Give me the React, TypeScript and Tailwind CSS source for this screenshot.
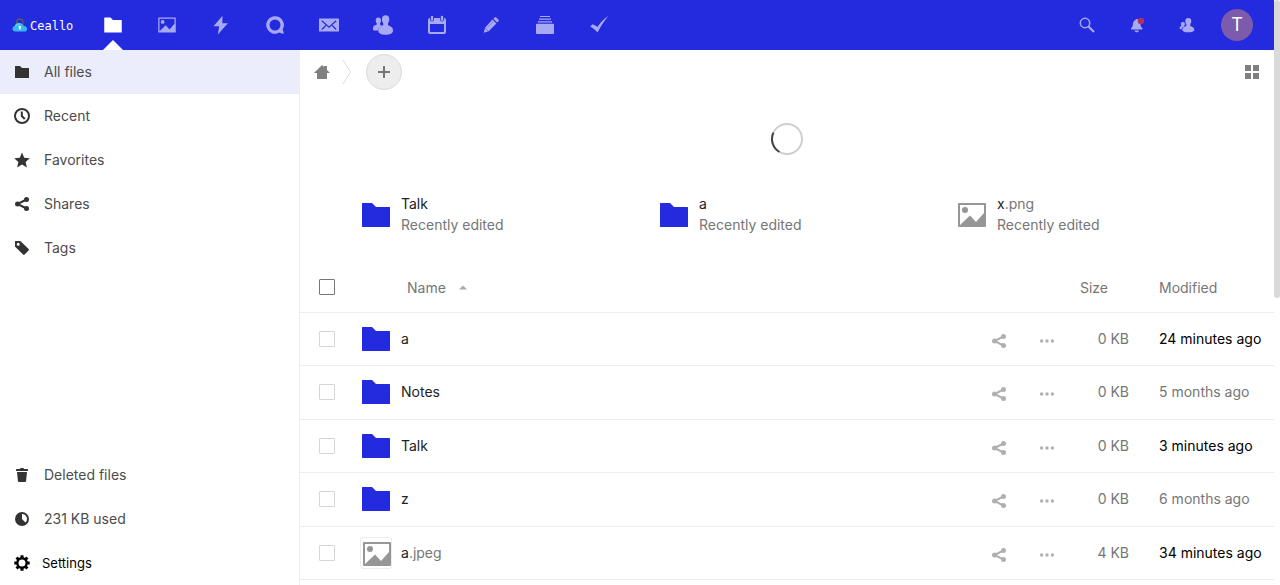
import type { ReactNode } from 'react';

type IconProps = { className?: string };

function Icon({ className = 'size-4', box = 16, children }: IconProps & { box?: number; children: ReactNode }) {
  return (
    <svg viewBox={`0 0 ${box} ${box}`} className={`shrink-0 ${className}`} fill="currentColor" aria-hidden="true">
      {children}
    </svg>
  );
}

const FolderIcon = ({ className }: IconProps) => (
  <Icon className={className}>
    <path d="M1.3 2a.3.3 0 0 0-.3.3v11.4c0 .17.13.3.3.3h13.4a.3.3 0 0 0 .3-.3V4.3a.3.3 0 0 0-.3-.3H8L6 2z" />
  </Icon>
);

const ImageIcon = ({ className }: IconProps) => (
  <Icon className={className} box={32}>
    <path
      fillRule="evenodd"
      d="M3 4a1 1 0 0 0-1 1v22a1 1 0 0 0 1 1h26a1 1 0 0 0 1-1V5a1 1 0 0 0-1-1zm1 2h24v8l-8 9-6-6.500-10 9.500z"
    />
    <circle cx="9" cy="11" r="3" />
  </Icon>
);

const BoltIcon = ({ className }: IconProps) => (
  <Icon className={className} box={32}>
    <path d="M18.500 1 4 18h9l-2 13 16-18h-9z" />
  </Icon>
);

const TalkIcon = ({ className }: IconProps) => (
  <Icon className={className} box={32}>
    <path
      fillRule="evenodd"
      d="M16 2a14 14 0 1 0 7.300 25.950c1.900 1.300 5.800 2.500 6.500 1.800.7-.7-.8-4.700-1.750-6.400A14 14 0 0 0 16 2zm0 5.200a8.800 8.800 0 1 1 0 17.600 8.800 8.800 0 0 1 0-17.600z"
    />
  </Icon>
);

const MailIcon = ({ className }: IconProps) => (
  <Icon className={className} box={20}>
    <rect x="0" y="3.500" width="20" height="13" rx=".6" />
    <path d="M2.800 5.800 10 12.200l7.200-6.400M2.800 14.500l4-4M17.200 14.500l-4-4" fill="none" stroke="#242bdf" strokeWidth="1.200" />
  </Icon>
);

const ContactsIcon = ({ className }: IconProps) => (
  <Icon className={className} box={20}>
    <path d="M5.300 2.500c1.700 0 2.700 1.200 2.700 3 0 1.200-.4 2.200-1 2.900v1.100c1 .5 1.700.8 2.100 1.200-2.400 1.100-4 1.900-4.100 4.900H1.500C.4 15.600 0 15 0 14.200c0-3.300.7-3.500 3.800-4.800V8.400c-.7-.7-1.100-1.700-1.100-2.900 0-1.800.9-3 2.600-3z" />
    <path d="M12.600.200c2.400 0 3.700 1.600 3.700 4.100 0 1.500-.5 2.900-1.300 3.900v2.100c3.300 1.400 5 1.800 5 5.600 0 2.400-3.300 3.800-7.400 3.800s-7.300-1.400-7.300-3.800c0-3.800 1.600-4.300 4.900-5.600V8.200C9.400 7.200 8.900 5.800 8.900 4.300 8.900 1.800 10.200.2 12.600.2z" />
  </Icon>
);

const CalendarIcon = ({ className }: IconProps) => (
  <Icon className={className} box={20}>
    <path fillRule="evenodd" d="M3 3v1.500a2 2 0 0 0 4 0V3h6v1.500a2 2 0 0 0 4 0V3a2 2 0 0 1 2 2v12a2 2 0 0 1-2 2H3a2 2 0 0 1-2-2V5a2 2 0 0 1 2-2zm0 6v7.200c0 .5.300.8.800.8h12.400c.5 0 .8-.3.8-.8V9z" />
    <rect x="3.800" y=".8" width="2.400" height="5" rx="1.200" />
    <rect x="13.800" y=".8" width="2.400" height="5" rx="1.200" />
  </Icon>
);

const PencilIcon = ({ className }: IconProps) => (
  <Icon className={className}>
    <path d="M11.700.500c.5-.5 1.100-.5 1.500 0l2.300 2.300c.5.500.5 1 0 1.500l-1.300 1.300-3.800-3.800zM9.500 2.600l3.900 3.900-7.700 7.700-4.900 1.600 1.200-5z" />
    <path d="m4.500 10.500 6-6" stroke="#242bdf" strokeWidth=".6" opacity=".4" />
    <path d="m2 11 3.200 3.200" stroke="#242bdf" strokeWidth=".6" opacity=".7" />
  </Icon>
);

const DeckIcon = ({ className }: IconProps) => (
  <Icon className={className} box={20}>
    <path d="M5 1h10v1H5zM4 3.500h12v1.200H4zM3 6.200h14v1.400H3z" />
    <rect x="1" y="8.800" width="18" height="10.200" rx="1" />
  </Icon>
);

const CheckIcon = ({ className }: IconProps) => (
  <Icon className={className} box={20}>
    <path d="M19.300 1C15 3.800 11.500 7.300 8.400 12 6.500 10.600 5 9.700 3.600 9.200L1.200 11.500c3 1.500 5.300 3.600 7.300 6C12 10.800 15.300 5.800 19.300 1z" />
  </Icon>
);

const SearchIcon = ({ className }: IconProps) => (
  <Icon className={className}>
    <path d="m9.500 9.500 5.500 5.500" stroke="currentColor" strokeWidth="2.100" />
    <circle cx="6" cy="6" r="4.700" fill="none" stroke="currentColor" strokeWidth="1.500" />
  </Icon>
);

const BellIcon = ({ className }: IconProps) => (
  <Icon className={className}>
    <path d="M7.700 2C6.700 2 6.500 2.500 6.500 3.100 4.500 3.700 4 5.500 3.900 7.500 3.800 9.500 3 10.300 2.200 11.100c-.5.500-.3 1.400.4 1.400h10.200c.7 0 .9-.9.4-1.400-.8-.8-1.600-1.600-1.700-3.600C11.400 4 10 2.600 7.700 2z" />
    <path d="M5.500 13.400h4.400c0 1-.9 1.900-2.200 1.900s-2.200-.9-2.200-1.900z" />
    <circle cx="12" cy="4" r="3.200" fill="#b0325e" />
  </Icon>
);

const UsersMenuIcon = ({ className }: IconProps) => (
  <Icon className={className}>
    <path d="M9.300 1c2 0 3 1.300 3 3.100 0 1.300-.4 2.200-1 3v1.800c2.700 1 4 1.500 4 4 0 1.400-2.800 2.300-6 2.300s-6-.9-6-2.300c0-2.400 1-2.900 4-4V7.100c-.7-.8-1-1.700-1-3C6.300 2.300 7.300 1 9.300 1z" />
    <path d="M3.900 5c1.300 0 2 .9 2 2 0 .8-.2 1.300-.6 1.800v.8C3.400 10.300 2.800 11 2.600 12.200H1.500c-.6 0-.9-.3-.9-1 0-1.200.5-1.500 1.900-2.100V8.800C2.100 8.300 1.900 7.800 1.900 7c0-1.100.7-2 2-2z" />
  </Icon>
);

const ClockIcon = ({ className }: IconProps) => (
  <Icon className={className}>
    <circle cx="8" cy="8" r="7" fill="none" stroke="currentColor" strokeWidth="2" />
    <path d="M7.800 3.500V8l3 3" fill="none" stroke="currentColor" strokeWidth="2" />
  </Icon>
);

const StarIcon = ({ className }: IconProps) => (
  <Icon className={className}>
    <path d="m8 .5 2.200 5.200 5.600.5-4.200 3.700 1.300 5.500L8 12.500l-4.900 2.900 1.300-5.500L.2 6.200l5.600-.5z" />
  </Icon>
);

const ShareIcon = ({ className }: IconProps) => (
  <Icon className={className}>
    <path d="M12.500 3.500 3.500 8l9 4.500" fill="none" stroke="currentColor" strokeWidth="2" />
    <circle cx="12.500" cy="3.500" r="2.500" />
    <circle cx="3.500" cy="8" r="2.500" />
    <circle cx="12.500" cy="12.500" r="2.500" />
  </Icon>
);

const TagIcon = ({ className }: IconProps) => (
  <Icon className={className}>
    <path fillRule="evenodd" d="M1.500 1a.5.500 0 0 0-.5.500V6c0 .3.200.7.400.9l7.700 7.700c.5.500 1 .5 1.500 0l4-4c.5-.5.500-1 0-1.500L6.900 1.400A1.500 1.500 0 0 0 6 1zm2.700 1.700a1.500 1.500 0 1 1 0 3 1.500 1.500 0 0 1 0-3z" />
  </Icon>
);

const TrashIcon = ({ className }: IconProps) => (
  <Icon className={className}>
    <path d="M6.500 1 6 2H3c-.55 0-1 .45-1 1v1h12V3c0-.55-.45-1-1-1h-3l-.5-1zM3 5l.9 9c.1.550.6 1 1.100 1h6c.5 0 1-.45 1.100-1L13 5z" />
  </Icon>
);

const QuotaIcon = ({ className }: IconProps) => (
  <Icon className={className}>
    <path fillRule="evenodd" d="M8 1a7 7 0 1 0 0 14A7 7 0 0 0 8 1zm0 2a5 5 0 0 1 3.500 8.500L8 8z" />
  </Icon>
);

const GearIcon = ({ className }: IconProps) => (
  <Icon className={className}>
    <circle cx="8" cy="8" r="4.700" fill="none" stroke="currentColor" strokeWidth="2.400" />
    <path
      d="M8 .3v3M8 12.700v3M.3 8h3M12.700 8h3M2.560 2.560l2 2M11.440 11.440l2 2M2.560 13.440l2-2M11.440 4.560l2-2"
      stroke="currentColor"
      strokeWidth="3"
    />
  </Icon>
);

const HomeIcon = ({ className }: IconProps) => (
  <Icon className={className}>
    <path d="M8 1 0 9h3v6h10V9h3l-3-3V2h-3v1z" />
  </Icon>
);

const GridIcon = ({ className }: IconProps) => (
  <Icon className={className}>
    <path d="M1 1h6v6H1zM9 1h6v6H9zM1 9h6v6H1zM9 9h6v6H9z" />
  </Icon>
);

const MoreIcon = ({ className }: IconProps) => (
  <Icon className={className}>
    <circle cx="2.600" cy="8" r="1.700" />
    <circle cx="8" cy="8" r="1.700" />
    <circle cx="13.400" cy="8" r="1.700" />
  </Icon>
);

function LogoMark() {
  return (
    <svg viewBox="0 0 16 14" className="h-3.5 w-4 shrink-0" aria-hidden="true">
      <path d="M4.700 6V4a3.100 3.100 0 0 1 6.200 0v3" fill="none" stroke="#5b5a5c" strokeWidth="1.500" />
      <path d="M3.500 13.500C1.400 13.500.5 12.200.5 10.700c0-1.500 1-2.500 2.200-2.800C3.200 5.800 5.200 4.700 7.500 5c2 .1 3.600 1.300 4.200 3 2 .1 3.400 1.200 3.400 2.900 0 1.600-1.200 2.600-3 2.600z" fill="#36b8f8" />
      <path d="M3.600 8.300C4.300 6.300 6 5.600 7.800 6" fill="none" stroke="#7fe3f5" strokeWidth="1" />
      <circle cx="7.800" cy="9" r="1.200" fill="#fff" />
      <path d="M7.300 9h1l.3 2.600H7z" fill="#fff" />
    </svg>
  );
}

const apps = [
  { name: 'Files', icon: <FolderIcon className="size-5" />, active: true },
  { name: 'Photos', icon: <ImageIcon className="size-5" /> },
  { name: 'Activity', icon: <BoltIcon className="size-5" /> },
  { name: 'Talk', icon: <TalkIcon className="size-5" /> },
  { name: 'Mail', icon: <MailIcon className="size-5" /> },
  { name: 'Contacts', icon: <ContactsIcon className="size-5" /> },
  { name: 'Calendar', icon: <CalendarIcon className="size-5" /> },
  { name: 'Notes', icon: <PencilIcon className="size-4" /> },
  { name: 'Deck', icon: <DeckIcon className="size-5" /> },
  { name: 'Tasks', icon: <CheckIcon className="size-5" /> },
];

function Header() {
  return (
    <header className="flex h-[50px] shrink-0 items-center bg-[#242bdf] px-3">
      <a href="#home" className="flex w-[74px] items-center gap-0.5 font-['DejaVu_Sans_Mono',monospace] text-xs text-white">
        <LogoMark />
        <span className="pt-0.5">Ceallo</span>
      </a>
      <nav className="flex h-full" aria-label="Apps">
        {apps.map((app) => (
          <a
            key={app.name}
            href={`#${app.name}`}
            aria-label={app.name}
            className={`relative flex w-[54px] items-center justify-center text-white ${app.active ? '' : '[&>svg]:opacity-60'}`}
          >
            {app.icon}
            {app.active && (
              <svg viewBox="0 0 20 10" className="absolute bottom-0 left-[17px] h-2.5 w-5" aria-hidden="true">
                <path d="M0 10 10 0l10 10z" fill="#fff" />
              </svg>
            )}
          </a>
        ))}
      </nav>
      <div className="ml-auto flex h-full text-white">
        <button aria-label="Search" className="flex w-[50px] items-center justify-center">
          <SearchIcon className="size-4 opacity-60" />
        </button>
        <button aria-label="Notifications" className="flex w-[50px] items-center justify-center text-[#a7aaf2]">
          <BellIcon />
        </button>
        <button aria-label="Contacts menu" className="flex w-[50px] items-center justify-center">
          <UsersMenuIcon className="size-4 opacity-60" />
        </button>
        <button aria-label="Account" className="flex w-[50px] items-center justify-center">
          <span className="flex size-8 items-center justify-center rounded-full bg-[#7c5aac] text-lg">T</span>
        </button>
      </div>
    </header>
  );
}

const views = [
  { name: 'All files', icon: <FolderIcon />, active: true },
  { name: 'Recent', icon: <ClockIcon /> },
  { name: 'Favorites', icon: <StarIcon /> },
  { name: 'Shares', icon: <ShareIcon /> },
  { name: 'Tags', icon: <TagIcon /> },
];

const storage = [
  { name: 'Deleted files', icon: <TrashIcon /> },
  { name: '231 KB used', icon: <QuotaIcon /> },
];

function SidebarLink({ name, icon, active }: { name: string; icon: ReactNode; active?: boolean }) {
  return (
    <li>
      <a href={`#${name}`} className={`flex h-11 items-center gap-3.5 pl-3.5 ${active ? 'bg-[#ebecfc]' : ''}`}>
        <span className="text-[#333]">{icon}</span>
        <span className="text-[#4c4c4c]">{name}</span>
      </a>
    </li>
  );
}

function Sidebar() {
  return (
    <aside className="flex w-[300px] shrink-0 flex-col justify-between border-r border-[#ededed]">
      <ul>
        {views.map((v) => (
          <SidebarLink key={v.name} {...v} />
        ))}
      </ul>
      <div>
        <ul>
          {storage.map((s) => (
            <SidebarLink key={s.name} {...s} />
          ))}
        </ul>
        <button className="flex h-11 w-full items-center gap-3 pl-3.5 text-[13px] text-black">
          <GearIcon />
          Settings
        </button>
      </div>
    </aside>
  );
}

function FileName({ base, ext }: { base: string; ext?: string }) {
  return (
    <span className="text-[#222]">
      {base}
      {ext && <span className="text-[#767676]">{ext}</span>}
    </span>
  );
}

const recent = [
  { base: 'Talk', folder: true },
  { base: 'a', folder: true },
  { base: 'x', ext: '.png', folder: false },
];

const files = [
  { base: 'a', folder: true, size: '0 KB', modified: '24 minutes ago', fresh: true },
  { base: 'Notes', folder: true, size: '0 KB', modified: '5 months ago' },
  { base: 'Talk', folder: true, size: '0 KB', modified: '3 minutes ago', fresh: true },
  { base: 'z', folder: true, size: '0 KB', modified: '6 months ago' },
  { base: 'a', ext: '.jpeg', folder: false, size: '4 KB', modified: '34 minutes ago', fresh: true },
];

function FileTable() {
  return (
    <table className="w-full table-fixed border-collapse text-[#767676]">
      <thead>
        <tr className="h-[50px] border-b border-[#ededed] text-left">
          <th className="w-[60px] pl-[19px]">
            <input type="checkbox" aria-label="Select all" className="block size-4 appearance-none rounded-[1px] border border-[#767676]" />
          </th>
          <th className="pt-0.5 font-normal">
            <button className="flex items-center gap-3 pl-[47px]">
              Name
              <svg viewBox="0 0 10 5" className="h-[5px] w-2.5" aria-hidden="true">
                <path d="M1 4.500 5 .5l4 4z" fill="#aaa" />
              </svg>
            </button>
          </th>
          <th className="w-24" aria-label="Actions" />
          <th className="w-[73px] pt-0.5 font-normal">
            <button className="block w-full pr-9 text-right">Size</button>
          </th>
          <th className="w-[130px] pt-0.5 pl-[15px] font-normal">
            <button>Modified</button>
          </th>
        </tr>
      </thead>
      <tbody>
        {files.map((f, i) => (
          <tr key={i} className="h-[53px] border-b border-[#ededed] even:h-[54px]">
            <td className="pl-[19px]">
              <input type="checkbox" aria-label={`Select ${f.base}`} className="block size-4 appearance-none rounded-[1px] border border-[#d6d6d6]" />
            </td>
            <td>
              <a href={`#${f.base}`} className="flex items-center gap-[9px]">
                {f.folder ? (
                  <FolderIcon className="size-8 text-[#242bdf]" />
                ) : (
                  <span className="size-8 overflow-hidden rounded-[3px] border border-[#ededed]">
                    <ImageIcon className="size-8 text-[#969696]" />
                  </span>
                )}
                <FileName base={f.base} ext={f.ext} />
              </a>
            </td>
            <td className="pt-1">
              <div className="flex text-[#b0b0b0]">
                <button aria-label="Share" className="flex w-12 justify-center">
                  <ShareIcon />
                </button>
                <button aria-label="More actions" className="flex w-12 justify-center">
                  <MoreIcon />
                </button>
              </div>
            </td>
            <td className="pr-[15px] text-right">{f.size}</td>
            <td className={`pl-[15px] whitespace-nowrap ${f.fresh ? 'text-black' : ''}`}>{f.modified}</td>
          </tr>
        ))}
      </tbody>
    </table>
  );
}

export default function App() {
  return (
    <div className="flex min-h-screen bg-white font-['Inter',sans-serif] text-sm">
      <div className="flex min-w-0 grow flex-col">
        <Header />
        <div className="flex grow">
          <Sidebar />
          <main className="min-w-0 grow">
            <div className="flex h-11 items-center px-3.5">
              <a href="#root" aria-label="Home" className="text-[#808080]">
                <HomeIcon />
              </a>
              <svg viewBox="0 0 10 24" className="mr-3.5 ml-3 h-6 w-2.5" aria-hidden="true">
                <path d="m1 0 7.500 12L1 24" fill="none" stroke="#dbdbdb" />
              </svg>
              <button aria-label="New" className="flex size-9 items-center justify-center rounded-full border border-[#dbdbdb] bg-[#ededed]">
                <svg viewBox="0 0 12 12" className="size-3" aria-hidden="true">
                  <path d="M5 0h2v5h5v2H7v5H5V7H0V5h5z" fill="#767676" />
                </svg>
              </button>
              <button aria-label="Grid view" className="ml-auto text-[#808080]">
                <GridIcon />
              </button>
            </div>
            <div className="flex h-[90px] items-center justify-center" role="status" aria-label="Loading">
              <svg viewBox="0 0 32 32" className="size-8" fill="none" strokeWidth="2" aria-hidden="true">
                <circle cx="16" cy="16" r="15" stroke="#cecece" />
                <path d="M2.400 9.700A15 15 0 0 0 8.500 29" stroke="#444" />
              </svg>
            </div>
            <ul className="flex h-[78px] items-start gap-[9px] pt-2.5 pl-[60px]">
              {recent.map((r) => (
                <li key={r.base} className="w-[289px]">
                  <a href={`#${r.base}`} className="flex h-[42px] items-center gap-[9px]">
                    {r.folder ? (
                      <FolderIcon className="size-8 text-[#242bdf]" />
                    ) : (
                      <ImageIcon className="size-8 text-[#969696]" />
                    )}
                    <span className="flex flex-col pb-0.5 leading-[21px]">
                      <FileName base={r.base} ext={r.ext} />
                      <span className="text-[#767676]">Recently edited</span>
                    </span>
                  </a>
                </li>
              ))}
            </ul>
            <FileTable />
          </main>
        </div>
      </div>
      <div className="w-1.5 shrink-0 bg-white" aria-hidden="true">
        <div className="h-[298px] rounded-full bg-[#dadada]" />
      </div>
    </div>
  );
}
